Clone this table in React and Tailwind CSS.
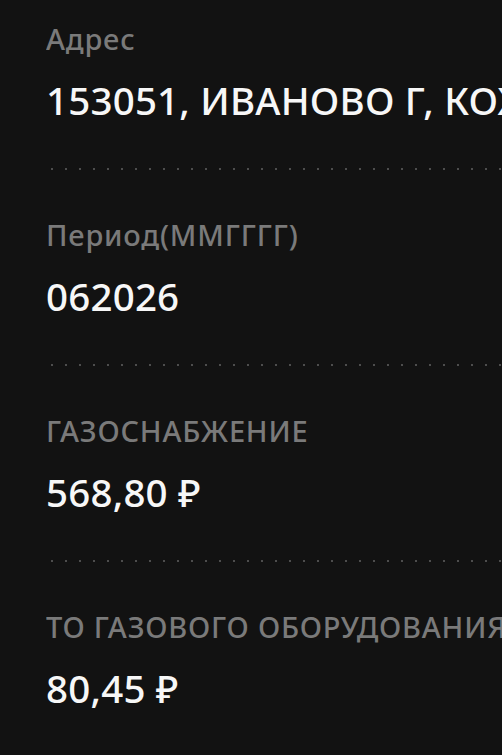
const rows = [
  { label: 'Адрес', value: '153051, ИВАНОВО Г, КОХМА, УЛ. ЛЕНИНА, Д. 1' },
  { label: 'Период(ММГГГГ)', value: '062026' },
  { label: 'ГАЗОСНАБЖЕНИЕ', value: '568,80 ₽' },
  { label: 'ТО ГАЗОВОГО ОБОРУДОВАНИЯ', value: '80,45 ₽' },
];

function Dots() {
  return (
    <div className="h-[2px] w-full bg-[radial-gradient(circle,#4d4d4d_0.9px,transparent_1.3px)] bg-[length:14px_2px] bg-repeat-x" />
  );
}

export default function App() {
  return (
    <div className="h-[755px] w-[502px] overflow-hidden bg-[#121212] font-['Noto_Sans',sans-serif]">
      {rows.map((row, i) => (
        <div key={i} className="pl-[46px]">
          <div className="pt-[19px] whitespace-nowrap overflow-hidden text-[29px] leading-[40px] font-medium tracking-[0.8px] text-[#7a7a7a]">
            {row.label}
          </div>
          <div className="mt-[15px] whitespace-nowrap overflow-hidden text-[38.5px] leading-[52px] font-medium tracking-[0.2px] text-[#f7f7f7]">
            {row.value}
          </div>
          <div className="mt-[42px] mb-[26px] -ml-px">
            <Dots />
          </div>
        </div>
      ))}
    </div>
  );
}
